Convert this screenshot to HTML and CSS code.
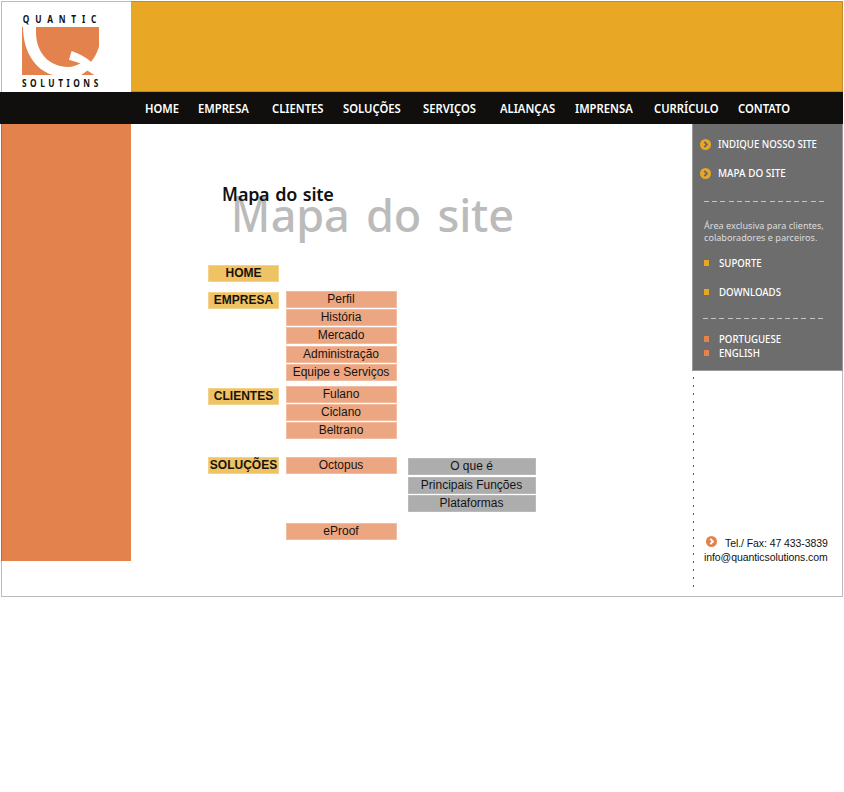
FILE: index.html
```html
<!DOCTYPE html>
<html lang="pt">
<head>
<meta charset="utf-8">
<title>Quantic Solutions - Mapa do site</title>
<link rel="stylesheet" href="styles.css">
</head>
<body>
<div class="page">
  <header class="top">
    <div class="logo">
      <div class="word quantic">QUANTIC</div>
      <svg class="mark" width="77" height="48" viewBox="66 80 231 144">
        <path fill="#e3824c" d="M66 80H297V224H66Z"/>
        <path fill="#fff" d="M69 79H108V96C108 157 147 200 205 200C219 200 231 195 241 189L207 178L215 152C239 160 257 171 273 184C283 174 291 157 297 139V225H283L262 211Q254 218 243 225H162C108 211 69 157 69 79Z"/>
        <path fill="#e3824c" d="M244 224L262 211L282 224Z"/>
      </svg>
      <div class="word solutions">SOLUTIONS</div>
    </div>
    <div class="banner"></div>
  </header>
  <nav class="nav">
    <a>HOME</a><a>EMPRESA</a><a>CLIENTES</a><a>SOLUÇÕES</a><a>SERVIÇOS</a><a>ALIANÇAS</a><a>IMPRENSA</a><a>CURRÍCULO</a><a>CONTATO</a>
  </nav>
  <div class="body">
    <div class="left"></div>
    <main class="main">
      <h1 class="title"><span class="shadow"><b>M</b>apa do site</span><span class="front"><b>M</b>apa do site</span></h1>
      <div class="map">
        <div class="row home"><div class="box cat">HOME</div></div>
        <div class="row empresa">
          <div class="box cat">EMPRESA</div>
          <div class="list"><div class="box sub">Perfil</div><div class="box sub">História</div><div class="box sub">Mercado</div><div class="box sub">Administração</div><div class="box sub">Equipe e Serviços</div></div>
        </div>
        <div class="row clientes">
          <div class="box cat">CLIENTES</div>
          <div class="list"><div class="box sub">Fulano</div><div class="box sub">Ciclano</div><div class="box sub">Beltrano</div></div>
        </div>
        <div class="row solucoes">
          <div class="box cat">SOLUÇÕES</div>
          <div class="list products"><div class="box sub">Octopus</div><div class="box sub">eProof</div></div>
          <div class="list detail"><div class="box leaf">O que é</div><div class="box leaf">Principais Funções</div><div class="box leaf">Plataformas</div></div>
        </div>
      </div>
    </main>
    <aside class="side">
      <div class="panel">
        <a class="link indique"><svg class="dot" viewBox="0 0 11 11"><circle cx="5.5" cy="5.5" r="5.5" fill="#e8a624"/><path d="M4.3 2.8L6.9 5.5L4.3 8.2" fill="none" stroke="#686868" stroke-width="1.9"/></svg><span>INDIQUE NOSSO SITE</span></a>
        <a class="link mapa"><svg class="dot" viewBox="0 0 11 11"><circle cx="5.5" cy="5.5" r="5.5" fill="#e8a624"/><path d="M4.3 2.8L6.9 5.5L4.3 8.2" fill="none" stroke="#686868" stroke-width="1.9"/></svg><span>MAPA DO SITE</span></a>
        <div class="dash first"></div>
        <p class="note">Área exclusiva para clientes,<br>colaboradores e parceiros.</p>
        <a class="item suporte"><i></i><span>SUPORTE</span></a>
        <a class="item downloads"><i></i><span>DOWNLOADS</span></a>
        <div class="dash second"></div>
        <a class="item lang pt"><i></i><span>PORTUGUESE</span></a>
        <a class="item lang en"><i></i><span>ENGLISH</span></a>
      </div>
      <div class="contact">
        <div class="tel"><svg class="dot" viewBox="0 0 11 11"><circle cx="5.5" cy="5.5" r="5.5" fill="#e3824c"/><path d="M4.3 2.8L6.9 5.5L4.3 8.2" fill="none" stroke="#fff" stroke-width="1.9"/></svg><span>Tel./ Fax: 47 433-3839</span></div>
        <div class="mail">info@quanticsolutions.com</div>
      </div>
    </aside>
  </div>
</div>
</body>
</html>
```
FILE: styles.css
```css
* { box-sizing: border-box; }
body { margin: 0; background: #fff; font-family: "Liberation Sans", sans-serif; }
.page { width: 843px; height: 597px; padding: 1px 0 0 1px; background: linear-gradient(#bcbcbc, #bcbcbc) 1px 596px / 842px 1px no-repeat, linear-gradient(#bcbcbc, #bcbcbc) 842px 1px / 1px 596px no-repeat, linear-gradient(#bcbcbc, #bcbcbc) 1px 1px / 1px 596px no-repeat, linear-gradient(#bcbcbc, #bcbcbc) 1px 1px / 842px 1px no-repeat; }
.top { display: flex; height: 91px; }
.logo { width: 130px; padding: 14px 0 0 21px; }
.banner { flex: 1; background: #e8a724; border: 1px solid #bd8b2b; border-left: 0; }
.word { width: 90px; font: bold 9.8px/9px "Noto Sans", sans-serif; color: #111; white-space: nowrap; transform: scaleX(.85); transform-origin: 0 0; }
.quantic { letter-spacing: 6.8px; padding-left: 1px; height: 12px; }
.solutions { letter-spacing: 4.15px; margin-top: 4px; }
.mark { display: block; width: 77px; height: 48px; }
.nav { display: grid; grid-template-columns: 53px 74px 71px 80px 77px 75px 79px 84px 60px; margin-left: -1px; padding-left: 145px; height: 32px; background: #100f0d; color: #fff; font: 600 13px/33px "Noto Sans", sans-serif; }
.nav a { white-space: nowrap; transform: scaleX(.865); transform-origin: 0 0; }
.body { display: flex; height: 472px; }
.left { width: 130px; height: 437px; background: #e3824c; border-left: 1px solid #b76b43; }
.main { width: 562px; }
.title { position: relative; height: 122px; margin: 0; font-weight: 400; font-family: "Noto Sans", sans-serif; }
.title span { position: absolute; white-space: nowrap; }
.title b { display: inline-block; font-weight: inherit; font-size: 1.14em; transform: scaleX(.83); transform-origin: 0 0; margin-right: -.14em; }
.shadow { left: 100px; top: 54px; font-size: 45px; line-height: 68px; color: #bbb; word-spacing: 5px; letter-spacing: -.2px; font-weight: 500; }
.front { left: 91px; top: 54px; font-size: 18px; line-height: 30px; color: #111; font-weight: 600; word-spacing: 1.5px; letter-spacing: -.3px; }
.map { padding-left: 77px; }
.row { display: flex; gap: 7px; align-items: flex-start; }
.box { height: 17px; text-align: center; font-size: 12px; line-height: 14px; color: #181310; white-space: nowrap; border: 1px solid; }
.cat { width: 71px; background: #efc263; border-color: #f3d28b; font-weight: bold; }
.sub { width: 111px; background: #eca782; border-color: #f1bca0; padding-right: 1px; }
.leaf { width: 128px; background: #adadad; border-color: #b9b9b9; padding-right: 1px; }
.home { margin-top: 19px; height: 26px; }
.list { display: grid; row-gap: 1px; }
.empresa { height: 95px; }
.empresa .cat { margin-top: 1px; }
.empresa .list { row-gap: 1.2px; }
.clientes { height: 71px; }
.clientes .cat { margin-top: 2px; }
.solucoes .products { row-gap: 49px; }
.solucoes .detail { margin: 1px 0 0 4px; row-gap: 1.5px; }
.side { width: 150px; position: relative; }
.side::before { content: ""; position: absolute; left: 0; top: 253px; width: 1px; height: 214px; background: repeating-linear-gradient(#555 0 2px, transparent 2px 8px); }
.panel { margin-left: -1px; width: 151px; height: 247px; padding: 14px 0 0 7px; background: #6d6d6d; border: 1px solid #999; border-width: 0 1px 1px; color: #fff; }
.link, .item { display: flex; align-items: center; height: 12px; font: 500 11px/12px "Noto Sans", sans-serif; white-space: nowrap; }
.link span, .item span { transform: scaleX(.875); transform-origin: 0 0; }
.dot { width: 11px; height: 11px; flex: none; }
.link span { margin-left: 7px; }
.mapa { margin-top: 17px; }
.mapa span { transform: scaleX(.9); }
.dash { width: 122px; height: 1px; background: repeating-linear-gradient(90deg, #c4c4c4 0 5px, transparent 5px 8.2px); }
.first { margin: 22px 0 0 4px; }
.note { margin: 18px 0 0 4px; font: 9.5px/12px "Noto Sans", sans-serif; color: #ddd; white-space: nowrap; transform: scaleX(.96); transform-origin: 0 0; }
.item { padding-left: 4px; }
.item i { width: 5px; height: 6px; margin-right: 10px; background: #e8a624; }
.item.lang i { background: #e3824c; }
.suporte { margin-top: 13px; }
.downloads { margin-top: 17px; }
.second { margin: 20px 0 0 3px; }
.pt { margin-top: 14px; }
.en { margin-top: 2px; }
.contact { margin-top: 166px; padding-left: 11px; font-size: 10.5px; line-height: 14px; color: #111; white-space: nowrap; letter-spacing: -.08px; }
.tel { display: flex; padding-left: 2px; }
.tel .dot { margin: -1px 8px 0 0; }
.tel span, .mail { position: relative; top: -1px; }
```
